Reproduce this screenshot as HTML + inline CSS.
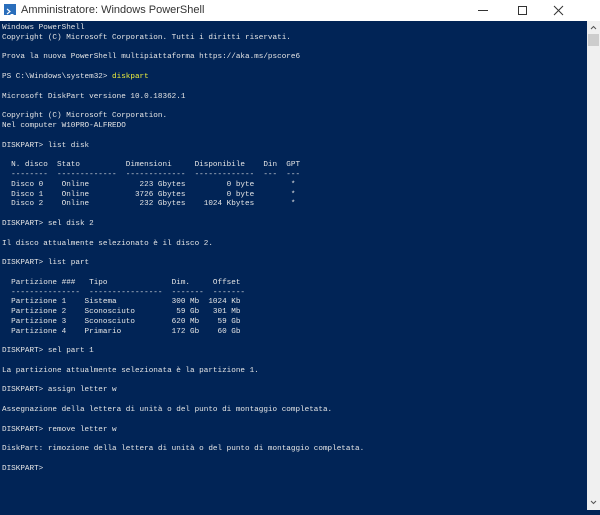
<!DOCTYPE html>
<html><head><style>
html,body{margin:0;padding:0;width:600px;height:512px;overflow:hidden;background:#012456}
.title{position:absolute;left:0;top:0;width:600px;height:21px;background:#fff;border-bottom:1px solid #ddd}
.title .t{position:absolute;left:21px;top:4px;font:11px "Liberation Sans",sans-serif;color:#333}
.icon{position:absolute;left:4px;top:4px;width:12px;height:11px;background:#2a6ebb}
.con{position:absolute;left:0;top:21px;width:587px;height:491px;background:#012456}
pre{margin:0;position:absolute;left:2px;top:3px;font:7.65px/9.8px "Liberation Mono",monospace;color:#e6e6e6}
.y{color:#f0f03c}
.sb{position:absolute;left:587px;top:21px;width:13px;height:489px;background:#f0f0f0}
.th{position:absolute;left:588px;top:34px;width:11px;height:12px;background:#cdcdcd}
</style></head><body>
<div class="title"><div class="icon"><svg width="12" height="11"><path d="M3 3l3 2.5-3 2.5" stroke="#fff" fill="none" stroke-width="1.2"/><path d="M6.5 8.5h3" stroke="#fff"/></svg></div><div class="t">Amministratore: Windows PowerShell</div>
<svg style="position:absolute;left:470px;top:0" width="130" height="21"><path d="M8 10.5h10" stroke="#333"/><path d="M48.5 6.5h8v8h-8z" stroke="#333" fill="none"/><path d="M84 6l9 9M93 6l-9 9" stroke="#333"/></svg></div>
<div class="con"><pre>Windows PowerShell
Copyright (C) Microsoft Corporation. Tutti i diritti riservati.

Prova la nuova PowerShell multipiattaforma https://aka.ms/pscore6

PS C:\Windows\system32&gt; <span class="y">diskpart</span>

Microsoft DiskPart versione 10.0.18362.1

Copyright (C) Microsoft Corporation.
Nel computer W10PRO-ALFREDO

DISKPART&gt; list disk

  N. disco  Stato          Dimensioni     Disponibile    Din  GPT
  --------  -------------  -------------  -------------  ---  ---
  Disco 0    Online           223 Gbytes         0 byte        *
  Disco 1    Online          3726 Gbytes         0 byte        *
  Disco 2    Online           232 Gbytes    1024 Kbytes        *

DISKPART&gt; sel disk 2

Il disco attualmente selezionato è il disco 2.

DISKPART&gt; list part

  Partizione ###   Tipo              Dim.     Offset
  ---------------  ----------------  -------  -------
  Partizione 1    Sistema            300 Mb  1024 Kb
  Partizione 2    Sconosciuto         59 Gb   301 Mb
  Partizione 3    Sconosciuto        620 Mb    59 Gb
  Partizione 4    Primario           172 Gb    60 Gb

DISKPART&gt; sel part 1

La partizione attualmente selezionata è la partizione 1.

DISKPART&gt; assign letter w

Assegnazione della lettera di unità o del punto di montaggio completata.

DISKPART&gt; remove letter w

DiskPart: rimozione della lettera di unità o del punto di montaggio completata.

DISKPART&gt;</pre></div>
<div class="sb"><svg width="13" height="489"><path d="M4 8l2.5-2.5L9 8" stroke="#555" fill="none"/><path d="M4 480l2.5 2.5L9 480" stroke="#555" fill="none"/></svg></div>
<div class="th"></div>
</body></html>
